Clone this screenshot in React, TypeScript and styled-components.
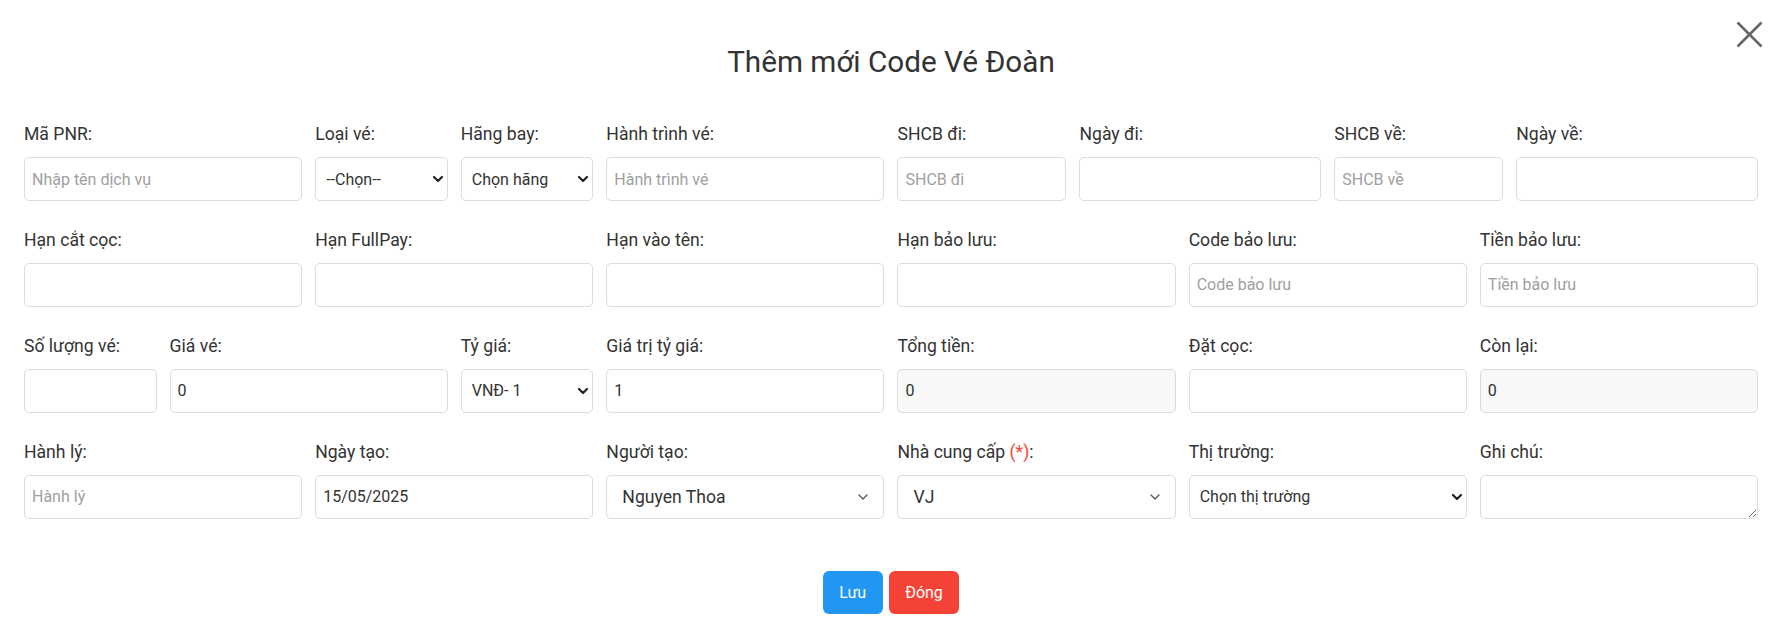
import React from "react";
import styled, { createGlobalStyle, css } from "styled-components";

const GlobalStyle = createGlobalStyle`
  html, body { margin: 0; padding: 0; background: #fff; }
  body { font-family: Roboto, "Noto Sans", Arial, sans-serif; color: #333; }
  *, *::before, *::after { box-sizing: border-box; }
`;

const Modal = styled.div`
  position: relative;
  width: 1780px;
  min-height: 631px;
  padding: 44px 22px 17px 24px;
  background: #fff;
`;

const Title = styled.h1`
  margin: 0;
  text-align: center;
  font-size: 29.7px;
  line-height: 35.6px;
  font-weight: 400;
  color: #333;
`;

const CloseButton = styled.button`
  position: absolute;
  top: 20px;
  right: 17px;
  width: 28px;
  height: 28px;
  padding: 0;
  border: 0;
  background: none;
  display: flex;
  align-items: center;
  justify-content: center;
  cursor: pointer;
`;

const FormGrid = styled.div`
  display: grid;
  grid-template-columns: repeat(12, minmax(0, 1fr));
  column-gap: 13px;
  row-gap: 26px;
  margin-top: 41.5px;
`;

const Field = styled.div<{ $span: number }>`
  grid-column: span ${(p) => p.$span};
  display: flex;
  flex-direction: column;
  min-width: 0;
`;

const SplitGroup = styled.div<{ $span: number }>`
  grid-column: span ${(p) => p.$span};
  display: grid;
  grid-template-columns: calc((100% + 13px) * 5 / 12 - 13px) minmax(0, 1fr);
  column-gap: 13px;
`;

const Label = styled.label`
  font-size: 17.6px;
  line-height: 26.4px;
  color: #333;
  margin-bottom: 9.5px;
  white-space: nowrap;
`;

const Required = styled.span`
  color: #f44336;
`;

const controlBase = css`
  display: block;
  width: 100%;
  height: 44px;
  border: 1px solid #dcdcdc;
  border-radius: 5px;
  background: #fff;
  font-family: inherit;
  font-size: 16px;
  color: #333;
  outline: none;
  margin: 0;
`;

const TextInput = styled.input<{ $muted?: boolean }>`
  ${controlBase}
  padding: 0 7px;
  background: ${(p) => (p.$muted ? "#f8f8f8" : "#fff")};
  &::placeholder {
    color: #a0a0a0;
  }
`;

const TextArea = styled.textarea`
  ${controlBase}
  padding: 6px 7px;
  resize: vertical;
  min-height: 44px;
`;

type SelectVariant = "native" | "select2";

const SelectWrap = styled.div`
  position: relative;
`;

const Select = styled.select<{ $variant: SelectVariant }>`
  ${controlBase}
  appearance: none;
  -webkit-appearance: none;
  padding: ${(p) => (p.$variant === "select2" ? "0 36px 0 15px" : "0 20px 0 10px")};
  font-size: ${(p) => (p.$variant === "select2" ? "17.6px" : "16px")};
  color: #333;
`;

const Chevron = styled.span<{ $variant: SelectVariant }>`
  position: absolute;
  top: 50%;
  right: ${(p) => (p.$variant === "select2" ? "16px" : "4px")};
  transform: translateY(-50%);
  pointer-events: none;
  display: flex;
`;

const Footer = styled.div`
  display: flex;
  justify-content: center;
  gap: 6px;
  margin-top: 52px;
`;

const Button = styled.button<{ $tone: "primary" | "danger" }>`
  height: 43px;
  padding: 0 16.5px;
  border: 0;
  border-radius: 6px;
  color: #fff;
  font-family: inherit;
  font-size: 16px;
  cursor: pointer;
  background: ${(p) => (p.$tone === "primary" ? "#2196f3" : "#f44336")};
`;

const ChevronIcon = ({ variant }: { variant: SelectVariant }) =>
  variant === "select2" ? (
    <svg width="10" height="6" viewBox="0 0 10 6">
      <polyline points="1,1 5,5 9,1" fill="none" stroke="#555" strokeWidth="1.3" strokeLinecap="round" strokeLinejoin="round" />
    </svg>
  ) : (
    <svg width="12" height="8" viewBox="0 0 12 8">
      <polyline points="2,2 6,6 10,2" fill="none" stroke="#222" strokeWidth="2.2" strokeLinecap="round" strokeLinejoin="round" />
    </svg>
  );

type Control =
  | { kind: "input"; placeholder?: string; value?: string; muted?: boolean }
  | { kind: "select"; variant: SelectVariant; value: string }
  | { kind: "textarea" };

type FieldDef = { label: string; required?: boolean; span: number; control: Control };

const renderControl = (c: Control) => {
  if (c.kind === "input") {
    return <TextInput type="text" placeholder={c.placeholder} defaultValue={c.value} $muted={c.muted} readOnly={c.muted} />;
  }
  if (c.kind === "textarea") {
    return <TextArea />;
  }
  return (
    <SelectWrap>
      <Select $variant={c.variant} defaultValue={c.value}>
        <option value={c.value}>{c.value}</option>
      </Select>
      <Chevron $variant={c.variant}>
        <ChevronIcon variant={c.variant} />
      </Chevron>
    </SelectWrap>
  );
};

const FieldView = ({ def }: { def: FieldDef }) => (
  <Field $span={def.span}>
    <Label>
      {def.label}
      {def.required && (
        <>
          {" "}
          <Required>(*)</Required>
        </>
      )}
      :
    </Label>
    {renderControl(def.control)}
  </Field>
);

const row1a: FieldDef[] = [
  { label: "Mã PNR", span: 2, control: { kind: "input", placeholder: "Nhập tên dịch vụ" } },
  { label: "Loại vé", span: 1, control: { kind: "select", variant: "native", value: "--Chọn--" } },
  { label: "Hãng bay", span: 1, control: { kind: "select", variant: "native", value: "Chọn hãng" } },
  { label: "Hành trình vé", span: 2, control: { kind: "input", placeholder: "Hành trình vé" } },
];

const splitPairs: [FieldDef, FieldDef][] = [
  [
    { label: "SHCB đi", span: 1, control: { kind: "input", placeholder: "SHCB đi" } },
    { label: "Ngày đi", span: 1, control: { kind: "input" } },
  ],
  [
    { label: "SHCB về", span: 1, control: { kind: "input", placeholder: "SHCB về" } },
    { label: "Ngày về", span: 1, control: { kind: "input" } },
  ],
];

const rest: FieldDef[] = [
  { label: "Hạn cắt cọc", span: 2, control: { kind: "input" } },
  { label: "Hạn FullPay", span: 2, control: { kind: "input" } },
  { label: "Hạn vào tên", span: 2, control: { kind: "input" } },
  { label: "Hạn bảo lưu", span: 2, control: { kind: "input" } },
  { label: "Code bảo lưu", span: 2, control: { kind: "input", placeholder: "Code bảo lưu" } },
  { label: "Tiền bảo lưu", span: 2, control: { kind: "input", placeholder: "Tiền bảo lưu" } },

  { label: "Số lượng vé", span: 1, control: { kind: "input" } },
  { label: "Giá vé", span: 2, control: { kind: "input", value: "0" } },
  { label: "Tỷ giá", span: 1, control: { kind: "select", variant: "native", value: "VNĐ- 1" } },
  { label: "Giá trị tỷ giá", span: 2, control: { kind: "input", value: "1" } },
  { label: "Tổng tiền", span: 2, control: { kind: "input", value: "0", muted: true } },
  { label: "Đặt cọc", span: 2, control: { kind: "input" } },
  { label: "Còn lại", span: 2, control: { kind: "input", value: "0", muted: true } },

  { label: "Hành lý", span: 2, control: { kind: "input", placeholder: "Hành lý" } },
  { label: "Ngày tạo", span: 2, control: { kind: "input", value: "15/05/2025" } },
  { label: "Người tạo", span: 2, control: { kind: "select", variant: "select2", value: "Nguyen Thoa" } },
  { label: "Nhà cung cấp", required: true, span: 2, control: { kind: "select", variant: "select2", value: "VJ" } },
  { label: "Thị trường", span: 2, control: { kind: "select", variant: "native", value: "Chọn thị trường" } },
  { label: "Ghi chú", span: 2, control: { kind: "textarea" } },
];

export default function App() {
  return (
    <>
      <GlobalStyle />
      <Modal>
        <CloseButton aria-label="Đóng">
          <svg width="27" height="27" viewBox="0 0 27 27">
            <path d="M1.5 1.5 L25.5 25.5 M25.5 1.5 L1.5 25.5" stroke="#666" strokeWidth="2.6" />
          </svg>
        </CloseButton>
        <Title>Thêm mới Code Vé Đoàn</Title>
        <FormGrid>
          {row1a.map((d) => (
            <FieldView key={d.label} def={d} />
          ))}
          {splitPairs.map(([a, b]) => (
            <SplitGroup key={a.label} $span={3}>
              <FieldView def={a} />
              <FieldView def={b} />
            </SplitGroup>
          ))}
          {rest.map((d) => (
            <FieldView key={d.label} def={d} />
          ))}
        </FormGrid>
        <Footer>
          <Button $tone="primary">Lưu</Button>
          <Button $tone="danger">Đóng</Button>
        </Footer>
      </Modal>
    </>
  );
}
